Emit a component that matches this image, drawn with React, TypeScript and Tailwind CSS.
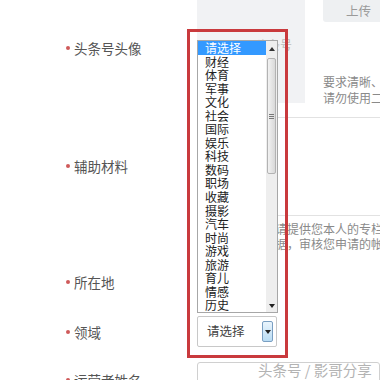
import React from "react";

const items = ["请选择","财经","体育","军事","文化","社会","国际","娱乐","科技","数码","职场","收藏","摄影","汽车","时尚","游戏","旅游","育儿","情感","历史"];

function Label({ text }: { text: string }) {
  return (
    <div className="flex items-center h-[16px] text-[13.5px] leading-[16px] text-[#555]">
      <span className="w-[4px] h-[4px] rounded-full bg-[#cf5a5a] mr-[4px]" />
      <span>{text}</span>
    </div>
  );
}

function Tri({ down, className }: { down?: boolean; className?: string }) {
  return (
    <svg width="6" height="4" viewBox="0 0 6 4" className={className}>
      {down ? <path d="M0 0 H6 L3 4 Z" fill="#222" /> : <path d="M0 4 H6 L3 0 Z" fill="#333" />}
    </svg>
  );
}

export default function App() {
  return (
    <div
      className="relative w-[380px] h-[380px] overflow-hidden bg-white"
      style={{ fontFamily: '"Noto Sans CJK SC", "Noto Sans", sans-serif' }}
    >
      {/* Row A */}
      <div className="flex h-[117px]">
        <div className="w-[197px] shrink-0 pl-[66px] pt-[40px]">
          <Label text="头条号头像" />
        </div>
        <div className="w-[108px] h-[103px] bg-[#f1f2f4] shrink-0 pt-[37px] pl-[59px] text-[12px] leading-[16px] text-[#bbb]">
          头条号
        </div>
        <div className="ml-[18px] flex flex-col shrink-0">
          <div className="w-[80px] h-[22px] bg-[#eef0f2] rounded-b-[3px] pl-[23px] text-[12.5px] leading-[22px] text-[#9a9a9a]">
            上传
          </div>
          <div className="mt-[52px] text-[12px] leading-[16px] text-[#8a8a8a] whitespace-nowrap">
            <div>要求清晰、</div>
            <div>请勿使用二</div>
          </div>
        </div>
      </div>

      {/* Row B */}
      <div className="flex h-[143px]">
        <div className="w-[197px] shrink-0 pl-[66px] pt-[41px]">
          <Label text="辅助材料" />
        </div>
        <div className="flex-1 border-t border-[#e2e2e2]">
          <div className="mt-[97px] border-t border-[#e2e2e2] pl-[78px] pt-[5px] text-[12px] leading-[15px] text-[#8a8a8a] whitespace-nowrap">
            <div>请提供您本人的专栏链</div>
            <div>据，审核您申请的帐号</div>
          </div>
        </div>
      </div>

      {/* Row C */}
      <div className="flex h-[50px]">
        <div className="w-[197px] shrink-0 pl-[66px] pt-[14px]">
          <Label text="所在地" />
        </div>
      </div>

      {/* Row D */}
      <div className="flex h-[50px]">
        <div className="w-[197px] shrink-0 pl-[66px] pt-[14px]">
          <Label text="领域" />
        </div>
        <div className="mt-[6px] w-[80px] h-[31px] border border-[#c8c8c8] rounded-[2px] flex items-center justify-between pl-[9px] pr-[3px]">
          <span className="text-[12.5px] text-[#444]">请选择</span>
          <div className="w-[11px] h-[21px] border border-[#7a9fc2] rounded-[2px] bg-gradient-to-b from-[#eaf5fd] to-[#b9dcf3] flex items-center justify-center">
            <Tri down />
          </div>
        </div>
      </div>

      {/* Row E */}
      <div className="flex h-[40px]">
        <div className="w-[197px] shrink-0 pl-[66px] pt-[12px]">
          <Label text="运营者姓名" />
        </div>
        <div className="mt-[2px] flex-1 h-[40px] border border-[#d0d0d0] rounded-[3px]" />
      </div>

      {/* Open listbox overlay */}
      <div className="absolute left-[197px] top-[40px] w-[81px] h-[273px] bg-white border border-[#a7a7a7] flex">
        <div className="flex-1 flex flex-col">
          {items.map((it, i) => (
            <div
              key={it}
              className={
                "h-[13.55px] leading-[13.55px] text-[12px] pl-[7px] whitespace-nowrap " +
                (i === 0 ? "bg-[#3399ff] text-white" : "text-[#222]")
              }
            >
              {it}
            </div>
          ))}
        </div>
        <div className="w-[11px] bg-[#eeeeee] flex flex-col items-center">
          <div className="h-[16px] flex items-center justify-center w-full">
            <Tri />
          </div>
          <div className="w-[9px] h-[116px] mt-[1px] rounded-[2px] border border-[#b3b3b3] bg-gradient-to-r from-[#f2f2f2] to-[#d9d9d9] flex flex-col items-center justify-center gap-[1px]">
            <div className="w-[5px] h-px bg-[#777]" />
            <div className="w-[5px] h-px bg-[#777]" />
            <div className="w-[5px] h-px bg-[#777]" />
          </div>
          <div className="flex-1" />
          <div className="h-[12px] flex items-center justify-center w-full">
            <Tri down />
          </div>
        </div>
      </div>

      {/* Red annotation box */}
      <div className="absolute left-[187px] top-[29px] w-[101px] h-[329px] border-[3px] border-[#c93a3d]" />

      {/* Watermark */}
      <div className="absolute left-[258px] top-[361px] text-[14.5px] leading-[18px] text-[#b3b3b3] whitespace-nowrap">
        头条号 / 影哥分享
      </div>
    </div>
  );
}
